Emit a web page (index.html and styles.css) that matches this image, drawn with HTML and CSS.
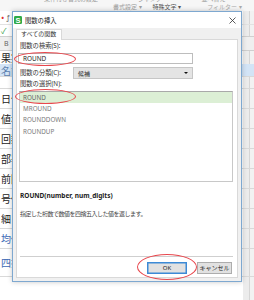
FILE: index.html
```html
<!DOCTYPE html>
<html lang="ja">
<head>
<meta charset="utf-8">
<link rel="stylesheet" href="styles.css">
</head>
<body>
<div class="app">
  <div class="ribbon">
    <div class="rb-top"><span class="rt1">条件付き書式の設定</span><span class="rt2">ジャンプ</span><span class="rt3">並べ替え</span></div>
    <div class="rb-bot"><span class="rb1">書式設定 ▾</span><span class="rb2">特殊文字 ▾</span><span class="rb3">フィルター ▾</span></div>
  </div>
  <div class="toolbar"><span class="red">•</span><span class="fx">ƒ</span></div>
  <div class="fbar"><span class="check">✓</span></div>
  <div class="colhdr"><span>B</span></div>
  <div class="rows">
    <div class="row rh1">果実</div>
    <div class="row rh2">名前</div>
    <div class="row rgap"></div>
    <div class="row">日付</div>
    <div class="row">値名</div>
    <div class="row">回数</div>
    <div class="row">部署</div>
    <div class="row">前回</div>
    <div class="row">号値</div>
    <div class="row">細目</div>
    <div class="row blue">均値</div>
    <div class="row blue tall">四捨</div>
  </div>
</div>

<div class="dialog">
  <div class="titlebar">
    <svg class="appicon" width="8" height="8" viewBox="0 0 8 8"><rect x="0" y="0" width="8" height="8" rx="1.3" fill="#2faa47"/><text x="4" y="6.6" text-anchor="middle" font-family="Liberation Sans, sans-serif" font-weight="bold" font-size="7.5" fill="#fff">S</text></svg>
    <span class="title">関数の挿入</span>
    <svg class="close" width="7" height="7" viewBox="0 0 7 7"><path d="M0.5 0.5L6.5 6.5M6.5 0.5L0.5 6.5" stroke="#333" stroke-width="0.8"/></svg>
  </div>
  <div class="dbody">
    <div class="tabs"><div class="tab">すべての関数</div></div>
    <div class="panel">
      <div class="lbl">関数の検索(S):</div>
      <div class="input">ROUND</div>
      <div class="catrow">
        <span class="lbl cat">関数の分類(C):</span>
        <div class="select"><span>候補</span><span class="arrow"></span></div>
      </div>
      <div class="lbl">関数の選択(N):</div>
      <div class="listbox">
        <div class="item sel">ROUND</div>
        <div class="item">MROUND</div>
        <div class="item">ROUNDDOWN</div>
        <div class="item">ROUNDUP</div>
      </div>
      <div class="syntax">ROUND(number, num_digits)</div>
      <div class="desc">指定した桁数で数値を四捨五入した値を返します。</div>
      <div class="sep"></div>
      <div class="buttons">
        <div class="btn ok">OK</div>
        <div class="btn">キャンセル</div>
      </div>
    </div>
  </div>
</div>

<div class="mark m1"></div>
<div class="mark m2"></div>
<div class="mark m3"></div>
</body>
</html>
```
FILE: styles.css
```css
* { box-sizing: border-box; }
body {
  margin: 0;
  width: 254px;
  height: 300px;
  overflow: hidden;
  position: relative;
  background: #fff;
  font-family: "Noto Sans", "Noto Sans CJK JP", sans-serif;
  color: #333;
}
.app {
  display: flex;
  flex-direction: column;
  height: 300px;
  background: linear-gradient(to right, transparent 243px, #ececec 243px, #ececec 249px, #d6d6d6 249px, #d6d6d6 250px, #f2f2f2 250px);
}
.ribbon { height: 11px; background: #f6f6f6; overflow: hidden; font-size: 6px; color: #9a9a9a; }
.rb-top { height: 7px; margin-top: -4px; line-height: 7px; display: flex; }
.rt1 { margin-left: 44px; }
.rt2 { margin-left: 40px; }
.rt3 { margin-left: 40px; }
.rb-bot { height: 8px; line-height: 8px; display: flex; white-space: nowrap; }
.rb1 { margin-left: 113px; color: #a0a0a0; }
.rb2 { margin-left: 11px; color: #555; }
.rb3 { margin-left: 26px; color: #aaa; }
.toolbar { height: 13px; display: flex; align-items: center; padding-left: 1px; font-size: 8px; }
.red { color: #e03030; font-size: 9px; }
.fx { color: #666; margin-left: 2px; font-size: 7px; }
.fbar { height: 13px; border-top: 1px solid #e2e2e2; border-bottom: 1px solid #d0d0d0; display: flex; align-items: center; padding-left: 1px; }
.check { color: #3aa04a; font-size: 8px; }
.colhdr { height: 14px; background: #efefef; border-bottom: 1px solid #cfcfcf; font-size: 7px; color: #666; padding-left: 4px; line-height: 13px; }
.rows { display: flex; flex-direction: column; }
.row { height: 20px; border-bottom: 1px solid #d9d9d9; font-size: 10px; line-height: 19px; padding-left: 1px; color: #222; white-space: nowrap; font-family: "Noto Sans CJK JP", sans-serif; overflow: hidden; }
.rh1 { height: 13px; line-height: 13px; border-bottom: none; }
.rh2 { height: 13px; line-height: 13px; background: #d3e4f6; color: #5a7fae; }
.rgap { height: 12px; }
.blue { color: #3d6bb5; }
.tall { height: 28px; line-height: 28px; }

.dialog {
  position: absolute;
  left: 12px;
  top: 11px;
  width: 230px;
  height: 271px;
  border: 1px solid #7ea8d0;
  background: #f0f0f0;
  box-shadow: 0 0 5px rgba(0, 0, 0, 0.22);
  display: flex;
  flex-direction: column;
}
.titlebar { height: 16px; background: #fff; display: flex; align-items: center; padding-left: 1px; padding-right: 5px; }
.appicon { display: block; }
.title { margin-left: 3px; font-size: 6.3px; color: #222; }
.close { margin-left: auto; }
.dbody { flex: 1; display: flex; flex-direction: column; padding: 1px 3px 3px 3px; }
.tabs { display: flex; height: 10px; }
.tab { width: 46px; height: 11px; background: #fff; border: 1px solid #d9d9d9; border-bottom: none; font-size: 6px; line-height: 9px; padding-left: 4px; color: #333; position: relative; z-index: 1; }
.panel { flex: 1; background: #fff; border: 1px solid #d9d9d9; display: flex; flex-direction: column; padding: 1px 4px 0 0; }
.lbl { height: 10px; line-height: 10px; font-size: 6.3px; margin-left: 3px; color: #333; white-space: nowrap; }
.input { margin-top: 2px; margin-left: 1px; width: 175px; height: 11px; border: 1px solid #bdbdbd; font-size: 6.4px; line-height: 9px; padding-left: 4px; color: #222; }
.catrow { margin-top: 3px; height: 12px; display: flex; align-items: center; }
.cat { width: 53px; flex: none; }
.select { width: 120px; height: 12px; background: #e4e4e4; border: 1px solid #c6c6c6; display: flex; align-items: center; padding-left: 4px; padding-right: 4px; font-size: 6px; color: #333; }
.arrow { margin-left: auto; width: 0; height: 0; border-left: 2px solid transparent; border-right: 2px solid transparent; border-top: 2px solid #111; }
.listbox { margin-top: 2px; margin-left: 2px; width: 214px; height: 91px; border: 1px solid #c8c8c8; border-top-color: #a9a9a9; }
.item { height: 11.2px; line-height: 11.2px; font-size: 6.3px; padding-left: 3px; color: #7a7a7a; }
.item.sel { background: #dcefd5; color: #666; }
.syntax { margin-top: 9px; margin-left: 3px; height: 10px; line-height: 10px; font-size: 6.5px; font-weight: bold; color: #222; white-space: nowrap; }
.desc { margin-top: 8px; margin-left: 3px; height: 10px; line-height: 10px; font-size: 6px; letter-spacing: -0.5px; color: #444; white-space: nowrap; }
.sep { margin-top: 37px; margin-left: 3px; height: 1px; background: #cfcfcf; }
.buttons { margin-top: 5px; height: 12px; display: flex; justify-content: flex-end; gap: 10px; padding-right: 1px; }
.btn { width: 35px; height: 12px; background: #e1e1e1; border: 1px solid #adadad; font-size: 6px; line-height: 10px; text-align: center; color: #222; }
.btn.ok { width: 40px; border: 1px solid #3c8ad6; box-shadow: inset 0 0 0 0.5px #3c8ad6; }

.mark { position: absolute; border: 1px solid #e8474d; border-radius: 50%; }
.m1 { left: 14px; top: 52px; width: 62px; height: 14px; }
.m2 { left: 15px; top: 89px; width: 61px; height: 15px; }
.m3 { left: 137px; top: 254px; width: 60px; height: 26px; }
```
